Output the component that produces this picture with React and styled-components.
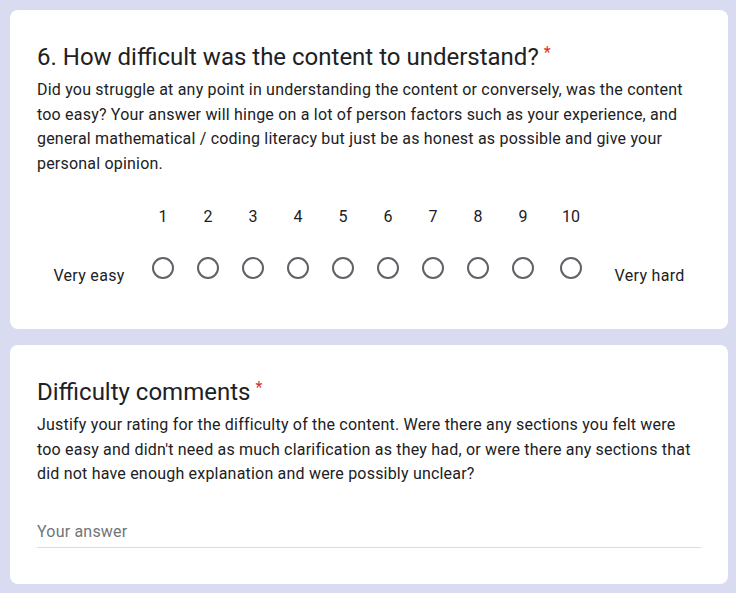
import React from "react";
import styled, { createGlobalStyle } from "styled-components";

const GlobalStyle = createGlobalStyle`
  html, body {
    margin: 0;
    padding: 0;
    background: #d9dbf0;
    font-family: Roboto, "Liberation Sans", Arial, sans-serif;
    color: #202124;
  }
`;

const Page = styled.main`
  display: flex;
  flex-direction: column;
  gap: 16px;
  padding: 10px 8px 10px 10px;
  width: 718px;
`;

const Card = styled.section`
  background: #fff;
  border-radius: 8px;
  padding: 30px 27px ${(p) => p.$bottom || 24}px 27px;
`;

const Title = styled.h2`
  margin: 0;
  font-size: 24px;
  font-weight: 400;
  line-height: 34px;
  letter-spacing: 0;
  color: #202124;
`;

const Required = styled.span`
  color: #d93025;
  font-size: 16px;
  vertical-align: top;
  margin-left: 5px;
  position: relative;
  top: -4px;
`;

const Desc = styled.p`
  margin: 4px 0 0;
  font-size: 16px;
  line-height: 24.7px;
  letter-spacing: 0.2px;
  color: #202124;
`;

const Scale = styled.div`
  display: flex;
  justify-content: center;
  align-items: flex-end;
  margin-top: 28px;
`;

const EndLabel = styled.div`
  font-size: 16px;
  line-height: 24px;
  letter-spacing: 0.3px;
  margin: ${(p) => (p.$right ? "0 0 0 18px" : "0 16px 0 0")};
`;

const Col = styled.label`
  display: flex;
  flex-direction: column;
  align-items: center;
  width: ${(p) => p.$w}px;
  font-size: 16px;
`;

const Num = styled.span`
  line-height: 24px;
  height: 24px;
  margin-bottom: 28px;
`;

const Radio = styled.span`
  display: block;
  width: 18px;
  height: 18px;
  border: 2px solid #5f6368;
  border-radius: 50%;
  margin-bottom: 9px;
`;

const Answer = styled.div`
  margin-top: 33px;
  width: 664px;
  padding-bottom: 3px;
  border-bottom: 1px solid #dadce0;
  font-size: 16px;
  line-height: 24px;
  letter-spacing: 0.2px;
  color: #70757a;
`;

const points = [1, 2, 3, 4, 5, 6, 7, 8, 9, 10];

export default function App() {
  return (
    <>
      <GlobalStyle />
      <Page>
        <Card $bottom={41}>
          <Title>
            6. How difficult was the content to understand?
            <Required>*</Required>
          </Title>
          <Desc>
            Did you struggle at any point in understanding the content or conversely, was the content
            too easy? Your answer will hinge on a lot of person factors such as your experience, and
            general mathematical / coding literacy but just be as honest as possible and give your
            personal opinion.
          </Desc>
          <Scale>
            <EndLabel>Very easy</EndLabel>
            {points.map((n) => (
              <Col key={n} $w={n === 10 ? 51 : 45}>
                <Num>{n}</Num>
                <Radio />
              </Col>
            ))}
            <EndLabel $right>Very hard</EndLabel>
          </Scale>
        </Card>
        <Card $bottom={36}>
          <Title>
            Difficulty comments
            <Required>*</Required>
          </Title>
          <Desc>
            Justify your rating for the difficulty of the content. Were there any sections you felt were
            too easy and didn't need as much clarification as they had, or were there any sections that
            did not have enough explanation and were possibly unclear?
          </Desc>
          <Answer>Your answer</Answer>
        </Card>
      </Page>
    </>
  );
}
